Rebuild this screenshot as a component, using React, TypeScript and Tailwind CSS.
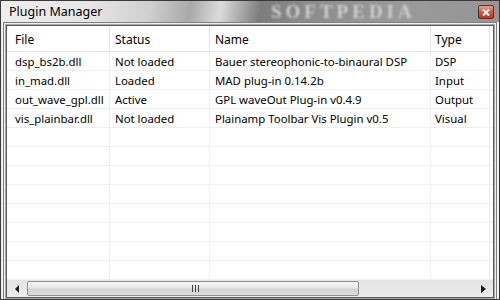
import React from 'react';

const rows = [
    ['dsp_bs2b.dll', 'Not loaded', 'Bauer stereophonic-to-binaural DSP', 'DSP'],
    ['in_mad.dll', 'Loaded', 'MAD plug-in 0.14.2b', 'Input'],
    ['out_wave_gpl.dll', 'Active', 'GPL waveOut Plug-in v0.4.9', 'Output'],
    ['vis_plainbar.dll', 'Not loaded', 'Plainamp Toolbar Vis Plugin v0.5', 'Visual'],
];

const filler = Array.from({ length: 8 }).map(() => ['', '', '', '']);

const cols = [
    'w-[103px] pl-[8px]',
    'w-[100px] pl-[5px]',
    'w-[221px] pl-[5px]',
    'w-[59px] pl-[4px]',
];

const Arrow = ({ dir }: { dir: 'left' | 'right' }) => (
    <svg width="5" height="8" viewBox="0 0 5 8">
        {dir === 'left' ? (
            <path d="M4 0 L0 4 L4 8 Z" fill="#1a1a1a" />
        ) : (
            <path d="M0 0 L5 4 L0 8 Z" fill="#1a1a1a" />
        )}
    </svg>
);

export default function App() {
    return (
        <div
            className="w-[500px] h-[300px] border border-[#3a3a3a] bg-[#f0f0f0] flex flex-col overflow-hidden text-[11.4px] text-black"
            style={{ fontFamily: '"Noto Sans", "Segoe UI", sans-serif' }}
        >
            {/* title bar */}
            <div className="relative h-[21px] shrink-0 overflow-hidden bg-[linear-gradient(100deg,#eeeeee_0%,#e6e6e6_18%,#cfcfcf_30%,#a9a9a9_38%,#dcdcdc_44%,#7c7c7c_52%,#8a8a8a_60%,#9a9a9a_80%,#959595_100%)]">
                <div className="absolute left-[270px] top-0 text-[19px] leading-[21px] tracking-[4px] text-[#cfcfcf] blur-[1px] font-bold" style={{ fontFamily: '"Liberation Serif", serif' }}>
                    SOFTPEDIA
                </div>
                <div className="absolute left-[8px] top-[2px] text-[12.5px] leading-[17px]">Plugin Manager</div>
                <div className="absolute left-[477px] top-[4px] w-[16px] h-[14px] rounded-[2px] border border-[#6a2a1a] bg-[linear-gradient(#e8a08a,#d45a3c_50%,#c0391c)] flex items-center justify-center">
                    <svg width="8" height="7" viewBox="0 0 8 7">
                        <path d="M1 0.5 L7 6.5 M7 0.5 L1 6.5" stroke="#ffffff" strokeWidth="2" />
                    </svg>
                </div>
            </div>

            {/* body */}
            <div className="flex-1 px-[2px] pb-[2px] flex">
                <div className="flex-1 border border-[#808080] p-[1px] flex">
                    <div className="flex-1 border border-[#a8a8a8] flex">
                        <div className="flex-1 border border-[#5a5a5a] bg-white flex flex-col overflow-hidden">
                            {/* header */}
                            <div className="flex h-[26px] shrink-0 border-b border-[#e5e5e5] text-[12px]">
                                {['File', 'Status', 'Name', 'Type'].map((h, i) => (
                                    <div key={h} className={`${cols[i]} border-r border-[#e3e3e3] flex items-center pt-[2px]`}>
                                        {h}
                                    </div>
                                ))}
                            </div>

                            {/* rows */}
                            <div className="flex-1 overflow-hidden">
                                {[...rows, ...filler].map((r, ri) => (
                                    <div key={ri} className="flex h-[19px] border-b border-[#efefef]">
                                        {r.map((c, ci) => (
                                            <div key={ci} className={`${cols[ci]} border-r border-[#efefef] flex items-center pt-[2px] whitespace-nowrap`}>
                                                {c}
                                            </div>
                                        ))}
                                    </div>
                                ))}
                            </div>

                            {/* horizontal scrollbar */}
                            <div className="h-[17px] shrink-0 flex items-center bg-[linear-gradient(#e3e3e3,#ededed)]">
                                <div className="w-[20px] h-full flex items-center justify-center">
                                    <Arrow dir="left" />
                                </div>
                                <div className="w-[332px] h-[15px] rounded-[2px] border border-[#8e8e8e] bg-[linear-gradient(#f6f6f6,#e8e8e8_45%,#d2d2d2_55%,#dcdcdc)] flex items-center justify-center">
                                    <div className="flex gap-[2px] pl-[4px]">
                                        <div className="w-[1px] h-[7px] bg-[#404040]" />
                                        <div className="w-[1px] h-[7px] bg-[#404040]" />
                                        <div className="w-[1px] h-[7px] bg-[#404040]" />
                                    </div>
                                </div>
                                <div className="flex-1" />
                                <div className="w-[20px] h-full flex items-center justify-center">
                                    <Arrow dir="right" />
                                </div>
                            </div>
                        </div>
                    </div>
                </div>
            </div>
        </div>
    );
}
